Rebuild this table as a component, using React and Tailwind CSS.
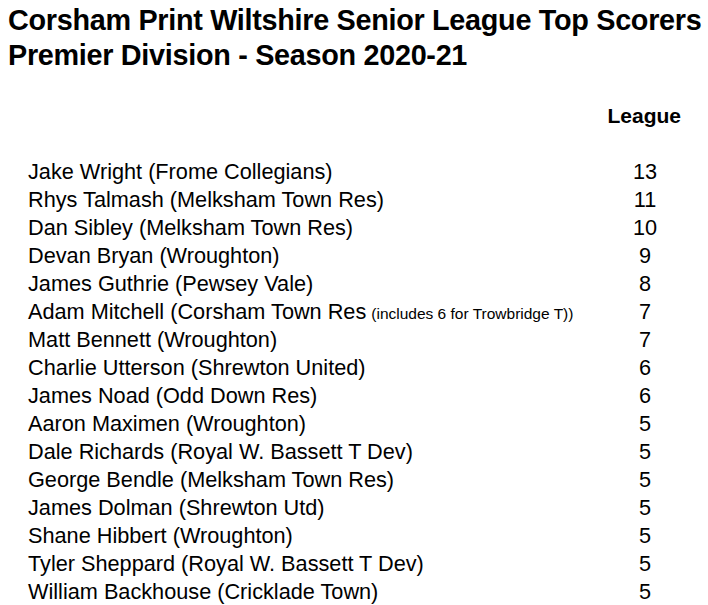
const ROWS = [
  ['Jake Wright (Frome Collegians)', 13],
  ['Rhys Talmash (Melksham Town Res)', 11],
  ['Dan Sibley (Melksham Town Res)', 10],
  ['Devan Bryan (Wroughton)', 9],
  ['James Guthrie (Pewsey Vale)', 8],
  ['Adam Mitchell (Corsham Town Res', 7, '(includes 6 for Trowbridge T))'],
  ['Matt Bennett (Wroughton)', 7],
  ['Charlie Utterson (Shrewton United)', 6],
  ['James Noad (Odd Down Res)', 6],
  ['Aaron Maximen (Wroughton)', 5],
  ['Dale Richards (Royal W. Bassett T Dev)', 5],
  ['George Bendle (Melksham Town Res)', 5],
  ['James Dolman (Shrewton Utd)', 5],
  ['Shane Hibbert (Wroughton)', 5],
  ['Tyler Sheppard (Royal W. Bassett T Dev)', 5],
  ['William Backhouse (Cricklade Town)', 5],
]

export default function App() {
  return (
    <div className="w-[708px] h-[605px] bg-white text-black overflow-hidden font-['Liberation_Sans',Arial,sans-serif]">
      <div className="pl-[8px] pt-[3px] font-bold text-[28.8px] leading-[35px] tracking-[-0.3px] whitespace-nowrap">
        <h1>Corsham Print Wiltshire Senior League Top Scorers</h1>
        <h2>Premier Division - Season 2020-21</h2>
      </div>

      <div className="flex justify-end pr-[27px] mt-[29px]">
        <span className="font-bold text-[21px] leading-[28px]">League</span>
      </div>

      <div className="mt-[28px] pl-[28px]">
        {ROWS.map(([name, goals, note]) => (
          <div key={name} className="flex items-baseline h-[28px] text-[21.7px] leading-[28px]">
            <div className="w-[582px] whitespace-nowrap">
              {name}
              {note && <span className="text-[15.5px] ml-[5px]">{note}</span>}
            </div>
            <div className="w-[70px] text-center">{goals}</div>
          </div>
        ))}
      </div>
    </div>
  )
}
